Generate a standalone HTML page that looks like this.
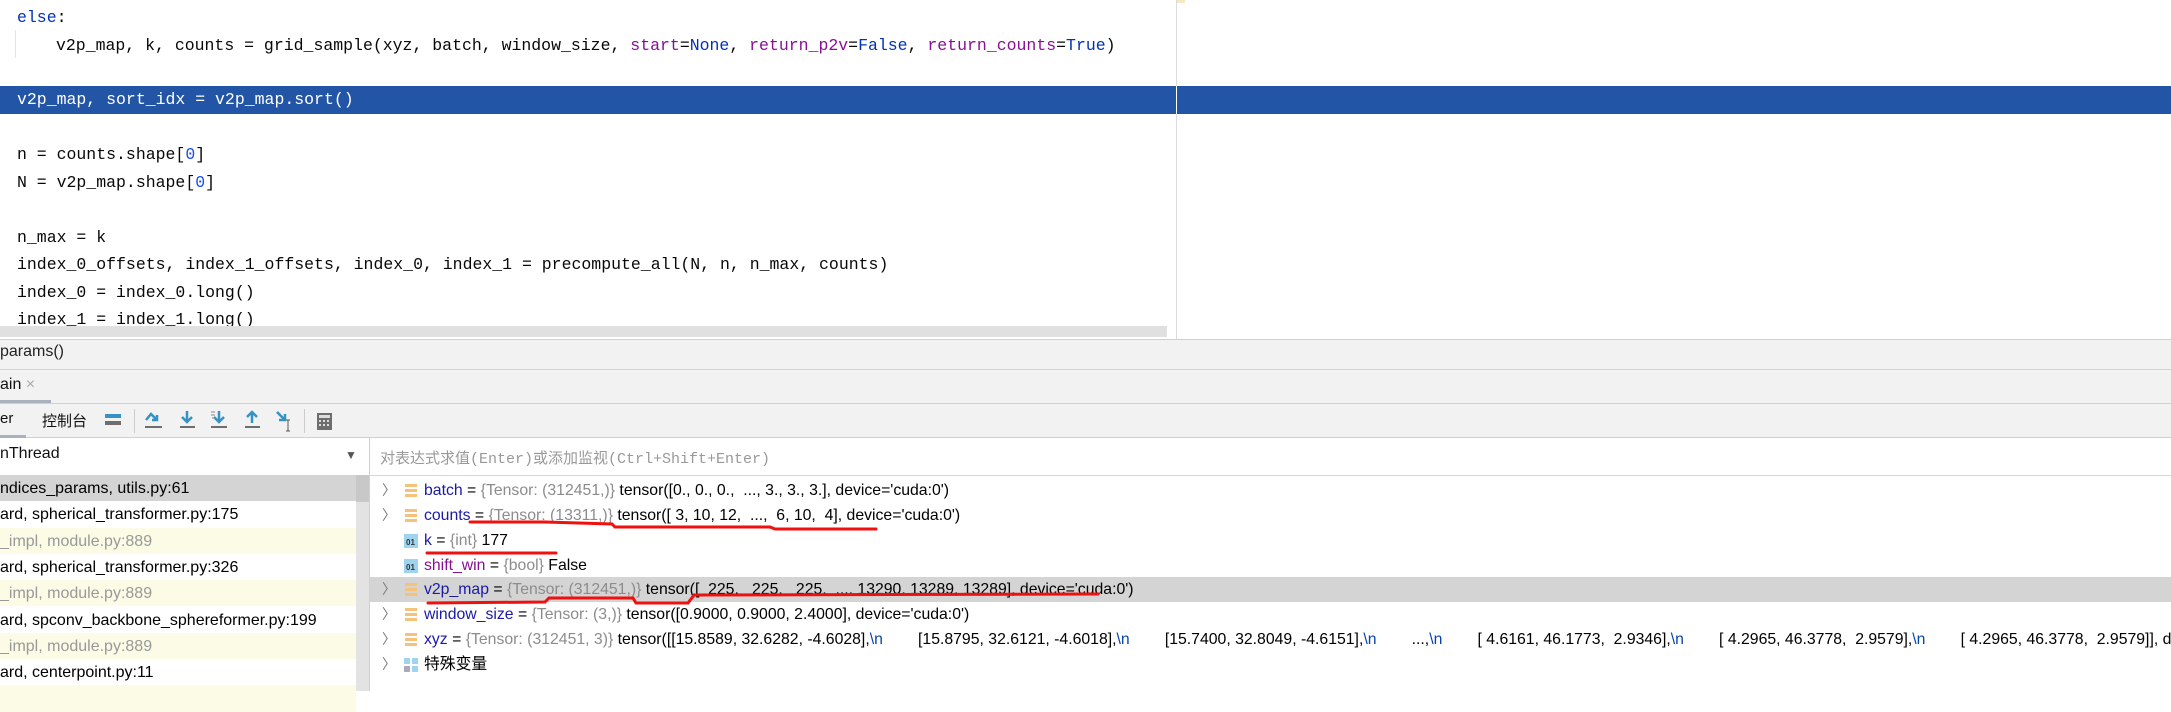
<!DOCTYPE html>
<html><head><meta charset="utf-8"><style>
*{margin:0;padding:0;box-sizing:border-box}
body{width:2171px;height:691px;overflow:hidden;background:#fff;position:relative;font-family:"Liberation Sans","Noto Sans CJK SC",sans-serif}
.a{position:absolute;white-space:pre}
.code{font-family:"Liberation Mono","Noto Sans CJK SC",monospace;font-size:16.5px;color:#080808;line-height:27.5px;height:27.5px;left:17px}
.kw{color:#0033b3}.pr{color:#871094}.num{color:#1750eb}
.fr{left:0;width:356px;height:26.3px;font-size:16px;line-height:28px;padding-left:0;overflow:hidden}
.y{background:#fbfbe6;color:#999}
.v{left:370px;width:1801px;height:25px;font-size:15.8px;line-height:25px;color:#000;overflow:hidden}
.n{color:#1a1aa6}.g{color:#8c8c8c}.b{color:#0645ad}
.chev{position:absolute;left:12px;top:0;color:#777;font-size:14px}
.ic{position:absolute;left:34px;top:6px;width:14px;height:14px}
.nm{position:absolute;left:54px;top:0}
</style></head><body>
<!-- editor -->
<div class="a" style="left:15px;top:30px;width:1px;height:28px;background:#e4e4e4"></div>
<div class="a" style="left:0;top:86px;width:2171px;height:28px;background:#2255a6"></div>
<div class="a code" style="top:4px"><span class="kw">else</span>:</div>
<div class="a code" style="top:31.5px;left:56px">v2p_map, k, counts = grid_sample(xyz, batch, window_size, <span class="pr">start</span>=<span class="kw">None</span>, <span class="pr">return_p2v</span>=<span class="kw">False</span>, <span class="pr">return_counts</span>=<span class="kw">True</span>)</div>
<div class="a code" style="top:86px;color:#fff">v2p_map, sort_idx = v2p_map.sort()</div>
<div class="a code" style="top:141px">n = counts.shape[<span class="num">0</span>]</div>
<div class="a code" style="top:168.5px">N = v2p_map.shape[<span class="num">0</span>]</div>
<div class="a code" style="top:223.5px">n_max = k</div>
<div class="a code" style="top:251px">index_0_offsets, index_1_offsets, index_0, index_1 = precompute_all(N, n, n_max, counts)</div>
<div class="a code" style="top:278.5px">index_0 = index_0.long()</div>
<div class="a code" style="top:306px">index_1 = index_1.long()</div>
<div class="a" style="left:1176px;top:0;width:1px;height:339px;background:#dcdcdc"></div>
<div class="a" style="left:1176px;top:86px;width:1px;height:28px;background:#fff"></div>
<div class="a" style="left:1177px;top:0;width:8px;height:3px;background:#f5e9c0"></div>
<div class="a" style="left:0;top:326px;width:1167px;height:11px;background:#e0e0e0"></div>
<!-- bottom panels -->
<div class="a" style="left:0;top:339px;width:2171px;height:99px;background:#f2f2f2;border-top:1px solid #d0d0d0"></div>
<div class="a" style="left:0;top:369px;width:2171px;height:1px;background:#d0d0d0"></div>
<div class="a" style="left:0;top:403px;width:2171px;height:1px;background:#d0d0d0"></div>
<div class="a" style="left:0;top:437px;width:2171px;height:1px;background:#d0d0d0"></div>
<div class="a" style="left:0;top:343px;font-size:16px;color:#222">params()</div>
<div class="a" style="left:0;top:376px;font-size:16px;color:#111">ain <span style="color:#aaa">×</span></div>
<div class="a" style="left:0;top:400px;width:51px;height:3px;background:#a9b1bd"></div>
<div class="a" style="left:0;top:410px;font-size:15px;color:#111">er</div>
<div class="a" style="left:0;top:435px;width:26px;height:3px;background:#a9b1bd"></div>
<div class="a" style="left:42px;top:410px;font-size:15px;color:#111">控制台</div>
<div class="a" style="left:134px;top:409px;width:1px;height:24px;background:#ccc"></div>
<div class="a" style="left:304px;top:409px;width:1px;height:24px;background:#ccc"></div>
<svg class="a" style="left:0;top:404px" width="340" height="33">
<g fill="#3592c4"><rect x="105" y="10" width="16" height="4"/><rect x="105" y="17" width="16" height="4" fill="#6e6e6e"/></g>
<g fill="#6e6e6e"><rect x="145" y="22" width="17" height="2"/><rect x="180" y="22" width="15" height="2"/><rect x="211" y="22" width="16" height="2"/><rect x="245" y="22" width="15" height="2"/></g>
<path d="M146 16 L151 10 L157 16 M157 11 v5 h-5" stroke="#3592c4" stroke-width="2.5" fill="none"/>
<path d="M187 7 v11 M182 13 l5 5 l5 -5" stroke="#3592c4" stroke-width="2.5" fill="none"/>
<path d="M219 7 v11 M214 13 l5 5 l5 -5" stroke="#3592c4" stroke-width="2.5" fill="none"/>
<path d="M211 8 h4 M211 11 h4 M212 14 h3" stroke="#888" stroke-width="1"/>
<path d="M252 19 v-11 M247 13 l5 -5 l5 5" stroke="#3592c4" stroke-width="2.5" fill="none"/>
<path d="M277 8 l8 8 M279 16 h6 v-6" stroke="#3592c4" stroke-width="2.5" fill="none"/>
<path d="M288 16 v11 M286 16 h4 M286 27 h4" stroke="#555" stroke-width="1"/>
<rect x="317" y="9" width="15" height="17" fill="#6e6e6e"/><rect x="319" y="11" width="11" height="3" fill="#ddd"/>
<g fill="#ddd"><rect x="319" y="16" width="2" height="2"/><rect x="323" y="16" width="2" height="2"/><rect x="327" y="16" width="2" height="2"/><rect x="319" y="20" width="2" height="2"/><rect x="323" y="20" width="2" height="2"/><rect x="327" y="20" width="2" height="2"/></g>
</svg>
<!-- thread -->
<div class="a" style="left:0;top:438px;width:369px;height:37px;background:#fff"></div>
<div class="a" style="left:0;top:445px;font-size:16px;color:#111">nThread</div>
<div class="a" style="left:345px;top:448px;font-size:12px;color:#555">▼</div>
<div class="a" style="left:369px;top:438px;width:1px;height:253px;background:#d0d0d0"></div>
<div class="a" style="left:370px;top:438px;width:1801px;height:37px;background:#fff"></div>
<div class="a" style="left:380px;top:447px;font-family:'Liberation Mono','Noto Sans CJK SC',monospace;font-size:15px;color:#999">对表达式求值(Enter)或添加监视(Ctrl+Shift+Enter)</div>
<div class="a" style="left:370px;top:475px;width:1801px;height:1px;background:#d6d6d6"></div>
<!-- frames -->
<div class="a fr" style="top:475px;background:#d4d4d4">ndices_params, utils.py:61</div>
<div class="a fr" style="top:501.3px">ard, spherical_transformer.py:175</div>
<div class="a fr y" style="top:527.6px">_impl, module.py:889</div>
<div class="a fr" style="top:553.9px">ard, spherical_transformer.py:326</div>
<div class="a fr y" style="top:580.2px">_impl, module.py:889</div>
<div class="a fr" style="top:606.5px">ard, spconv_backbone_sphereformer.py:199</div>
<div class="a fr y" style="top:632.8px">_impl, module.py:889</div>
<div class="a fr" style="top:659.1px">ard, centerpoint.py:11</div>
<div class="a fr y" style="top:685.4px"></div>
<div class="a" style="left:356px;top:475px;width:13px;height:216px;background:#e3e3e3"></div>
<div class="a" style="left:356px;top:475px;width:13px;height:27px;background:#c8c8c8"></div>
<!-- variables -->
<div class="a" style="left:370px;top:577px;width:1801px;height:25px;background:#d4d4d4"></div>
<div class="a v" style="top:478px"><span class="chev">〉</span><svg class="ic" viewBox="0 0 14 14"><g fill="#f6c27a"><rect x="1" y="0" width="12" height="3"/><rect x="1" y="5" width="12" height="3"/><rect x="1" y="10" width="12" height="3"/></g></svg><span class="nm"><span class="n">batch</span> = <span class="g">{Tensor: (312451,)}</span> tensor([0., 0., 0.,  ..., 3., 3., 3.], device='cuda:0')</span></div>
<div class="a v" style="top:503px"><span class="chev">〉</span><svg class="ic" viewBox="0 0 14 14"><g fill="#f6c27a"><rect x="1" y="0" width="12" height="3"/><rect x="1" y="5" width="12" height="3"/><rect x="1" y="10" width="12" height="3"/></g></svg><span class="nm"><span class="n">counts</span> = <span class="g">{Tensor: (13311,)}</span> tensor([ 3, 10, 12,  ...,  6, 10,  4], device='cuda:0')</span></div>
<div class="a v" style="top:528px"><svg class="ic" viewBox="0 0 14 14"><rect width="14" height="14" fill="#9fd4ef"/><text x="2" y="11" font-size="8" font-weight="bold" fill="#333" font-family="Liberation Sans">01</text></svg><span class="nm"><span class="n">k</span> = <span class="g">{int}</span> 177</span></div>
<div class="a v" style="top:553px"><svg class="ic" viewBox="0 0 14 14"><rect width="14" height="14" fill="#9fd4ef"/><text x="2" y="11" font-size="8" font-weight="bold" fill="#333" font-family="Liberation Sans">01</text></svg><span class="nm"><span style="color:#871094">shift_win</span> = <span class="g">{bool}</span> False</span></div>
<div class="a v" style="top:577px"><span class="chev">〉</span><svg class="ic" viewBox="0 0 14 14"><g fill="#f6c27a"><rect x="1" y="0" width="12" height="3"/><rect x="1" y="5" width="12" height="3"/><rect x="1" y="10" width="12" height="3"/></g></svg><span class="nm"><span class="n">v2p_map</span> = <span class="g">{Tensor: (312451,)}</span> tensor([  225,   225,   225,  ..., 13290, 13289, 13289], device='cuda:0')</span></div>
<div class="a v" style="top:602px"><span class="chev">〉</span><svg class="ic" viewBox="0 0 14 14"><g fill="#f6c27a"><rect x="1" y="0" width="12" height="3"/><rect x="1" y="5" width="12" height="3"/><rect x="1" y="10" width="12" height="3"/></g></svg><span class="nm"><span class="n">window_size</span> = <span class="g">{Tensor: (3,)}</span> tensor([0.9000, 0.9000, 2.4000], device='cuda:0')</span></div>
<div class="a v" style="top:627px"><span class="chev">〉</span><svg class="ic" viewBox="0 0 14 14"><g fill="#f6c27a"><rect x="1" y="0" width="12" height="3"/><rect x="1" y="5" width="12" height="3"/><rect x="1" y="10" width="12" height="3"/></g></svg><span class="nm"><span class="n">xyz</span> = <span class="g">{Tensor: (312451, 3)}</span> tensor([[15.8589, 32.6282, -4.6028],<span class="b">\n</span>        [15.8795, 32.6121, -4.6018],<span class="b">\n</span>        [15.7400, 32.8049, -4.6151],<span class="b">\n</span>        ...,<span class="b">\n</span>        [ 4.6161, 46.1773,  2.9346],<span class="b">\n</span>        [ 4.2965, 46.3778,  2.9579],<span class="b">\n</span>        [ 4.2965, 46.3778,  2.9579]], device='cuda:0')</span></div>
<div class="a v" style="top:652px"><span class="chev">〉</span><svg class="ic" viewBox="0 0 14 14"><rect x="0" y="0" width="6" height="6" fill="#9fd4ef"/><rect x="8" y="0" width="6" height="6" fill="#9fd4ef"/><rect x="0" y="8" width="6" height="6" fill="#aab"/><rect x="8" y="8" width="6" height="6" fill="#9fd4ef"/></svg><span class="nm">特殊变量</span></div>
<!-- red underlines -->
<svg class="a" style="left:0;top:0" width="2171" height="691">
<g stroke="#f01010" stroke-width="3" fill="none" stroke-linecap="round">
<path d="M470 522 L545 522 L612 524 L615 527 L770 527 L775 529 L876 529"/>
<path d="M427 553 L556 553"/>
<path d="M428 603 L545 602 L549 598 L633 598 L636 603 L688 603 L694 595 L1098 594"/>
</g></svg>
</body></html>
